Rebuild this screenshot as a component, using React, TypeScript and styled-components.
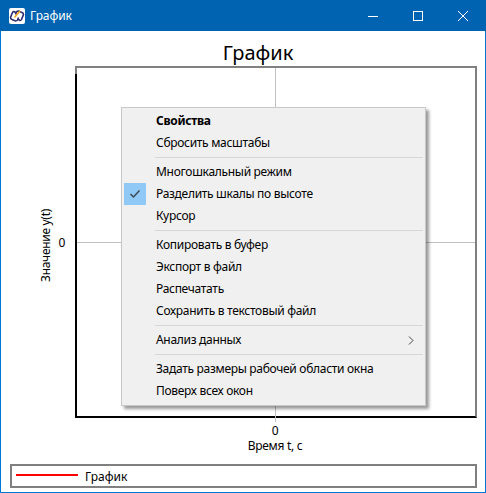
import styled, { createGlobalStyle } from "styled-components";

const GlobalStyle = createGlobalStyle`
  html, body {
    margin: 0;
    padding: 0;
    background: #fff;
  }
  body {
    font-family: "Noto Sans", "Open Sans", sans-serif;
    font-size: 12px;
    letter-spacing: -0.3px;
    color: #000;
  }
`;

const Window = styled.div`
  position: relative;
  width: 486px;
  height: 493px;
  box-sizing: border-box;
  display: flex;
  flex-direction: column;
  background: #fff;
  border: 1px solid #0078d7;
  border-top: 0;
`;

const TitleBar = styled.header`
  flex: none;
  height: 31px;
  margin: 0 -1px;
  display: flex;
  align-items: center;
  padding: 0 1px 0 9px;
  background: #0063b1;
  color: #fff;
`;

const AppIcon = styled.svg`
  width: 16px;
  height: 16px;
  margin-right: 5px;
`;

const WindowTitle = styled.span`
  flex: 1;
  font-size: 12px;
  letter-spacing: -0.1px;
`;

const WindowButton = styled.button`
  width: 45px;
  height: 31px;
  padding: 0;
  border: 0;
  background: none;
  display: flex;
  align-items: center;
  justify-content: center;
`;

const ChartTitle = styled.h1`
  margin: 8px 0 0;
  padding-left: 30px;
  height: 27px;
  line-height: 27px;
  text-align: center;
  font-size: 20px;
  font-weight: 400;
  letter-spacing: 0;
`;

const PlotRow = styled.div`
  flex: none;
  height: 352px;
  display: flex;
  padding-right: 8px;
`;

const YAxis = styled.div`
  width: 74px;
  flex: none;
  display: flex;
  align-items: center;
  justify-content: flex-end;
`;

const YLabel = styled.span`
  writing-mode: vertical-rl;
  transform: rotate(180deg);
  margin-right: 4px;
  margin-top: 6px;
  line-height: 16px;
`;

const YTick = styled.span`
  margin-right: 10px;
`;

const Frame = styled.div`
  position: relative;
  flex: 1;
  box-sizing: border-box;
  border: 2px solid #808080;
  border-left-color: #000;
  border-bottom-color: #000;

  &::before {
    content: "";
    position: absolute;
    left: -2px;
    top: -2px;
    width: 2px;
    height: 8px;
    background: #808080;
  }
`;

const GridV = styled.div`
  position: absolute;
  top: 0;
  bottom: -6px;
  left: 198px;
  width: 1px;
  background: #c0c0c0;
`;

const GridH = styled.div`
  position: absolute;
  left: 0;
  right: 0;
  top: 50%;
  height: 1px;
  background: #c0c0c0;
`;

const XAxis = styled.div`
  flex: none;
  height: 30px;
  margin-left: 74px;
  padding-right: 10px;
  box-sizing: border-box;
  display: flex;
  flex-direction: column;
  align-items: center;
  padding-top: 5px;
  line-height: 15px;
`;

const Legend = styled.div`
  flex: none;
  height: 24px;
  margin: 16px 8px 0 9px;
  box-sizing: border-box;
  border: 2px solid #808080;
  display: flex;
  align-items: center;
  padding-left: 4px;
  gap: 7px;
  letter-spacing: 0;
`;

const LegendLine = styled.div`
  width: 62px;
  height: 2px;
  background: #f00;
  margin-bottom: 2px;
`;

const Menu = styled.div`
  position: absolute;
  left: 120px;
  top: 107px;
  width: 305px;
  box-sizing: border-box;
  padding: 2px 0 3px;
  background: #f0f0f0;
  border: 1px solid #c8c8c8;
  box-shadow: 3px 3px 3px rgba(0, 0, 0, 0.4);
  display: flex;
  flex-direction: column;
`;

const Item = styled.div<{ $bold?: boolean }>`
  position: relative;
  height: 22px;
  line-height: 22px;
  padding-left: 34px;
  font-weight: ${(p) => (p.$bold ? 700 : 400)};
`;

const Check = styled.div`
  position: absolute;
  left: 2px;
  top: 0;
  width: 22px;
  height: 22px;
  background: #90c8f6;
  display: flex;
  align-items: center;
  justify-content: center;
`;

const Arrow = styled.svg`
  position: absolute;
  right: 11px;
  top: 7px;
  width: 6px;
  height: 9px;
`;

const Separator = styled.div`
  height: 1px;
  margin: 3px 2px 3px 33px;
  background: #d7d7d7;
`;

const App = () => {
  return (
    <Window>
      <GlobalStyle />
      <TitleBar>
        <AppIcon viewBox="0 0 16 16">
          <rect width="16" height="16" rx="2" fill="#fff" />
          <path d="M7.500 5L5 3.500Q4 3.500 3.500 4.500L1.500 9.500Q1.500 11 3 11.500L6.500 13Q8 13 8.500 12L9.500 9.500" fill="none" stroke="#2d2a6e" strokeWidth="1.600" />
          <path d="M8.500 11L11 12.500Q12 12.500 12.500 11.500L14.500 6.500Q14.500 5 13 4.500L9.500 3Q8 3 7.500 4L6.500 6.500" fill="none" stroke="#2d2a6e" strokeWidth="1.600" />
          <path d="M5.500 9.500L11 3" fill="none" stroke="#f5a623" strokeWidth="1.600" />
        </AppIcon>
        <WindowTitle>График</WindowTitle>
        <WindowButton>
          <svg width="10" height="10" viewBox="0 0 10 10">
            <path d="M0 5.500H10" stroke="#fff" />
          </svg>
        </WindowButton>
        <WindowButton>
          <svg width="10" height="10" viewBox="0 0 10 10">
            <rect x="0.500" y="0.500" width="9" height="9" fill="none" stroke="#fff" />
          </svg>
        </WindowButton>
        <WindowButton>
          <svg width="10" height="10" viewBox="0 0 10 10">
            <path d="M0 0L10 10M10 0L0 10" stroke="#fff" />
          </svg>
        </WindowButton>
      </TitleBar>
      <ChartTitle>График</ChartTitle>
      <PlotRow>
        <YAxis>
          <YLabel>Значение y(t)</YLabel>
          <YTick>0</YTick>
        </YAxis>
        <Frame>
          <GridV />
          <GridH />
        </Frame>
      </PlotRow>
      <XAxis>
        <span>0</span>
        <span>Время t, c</span>
      </XAxis>
      <Legend>
        <LegendLine />
        <span>График</span>
      </Legend>
      <Menu>
        <Item $bold>Свойства</Item>
        <Item>Сбросить масштабы</Item>
        <Separator />
        <Item>Многошкальный режим</Item>
        <Item>
          <Check>
            <svg width="12" height="10" viewBox="0 0 12 10">
              <path d="M1.500 5L4.500 8L10.500 1.500" fill="none" stroke="#3c4a58" strokeWidth="1.500" />
            </svg>
          </Check>
          Разделить шкалы по высоте
        </Item>
        <Item>Курсор</Item>
        <Separator />
        <Item>Копировать в буфер</Item>
        <Item>Экспорт в файл</Item>
        <Item>Распечатать</Item>
        <Item>Сохранить в текстовый файл</Item>
        <Separator />
        <Item>
          Анализ данных
          <Arrow viewBox="0 0 6 9">
            <path d="M1 0.500L5 4.500L1 8.500" fill="none" stroke="#444" />
          </Arrow>
        </Item>
        <Separator />
        <Item>Задать размеры рабочей области окна</Item>
        <Item>Поверх всех окон</Item>
      </Menu>
    </Window>
  );
};

export default App;
